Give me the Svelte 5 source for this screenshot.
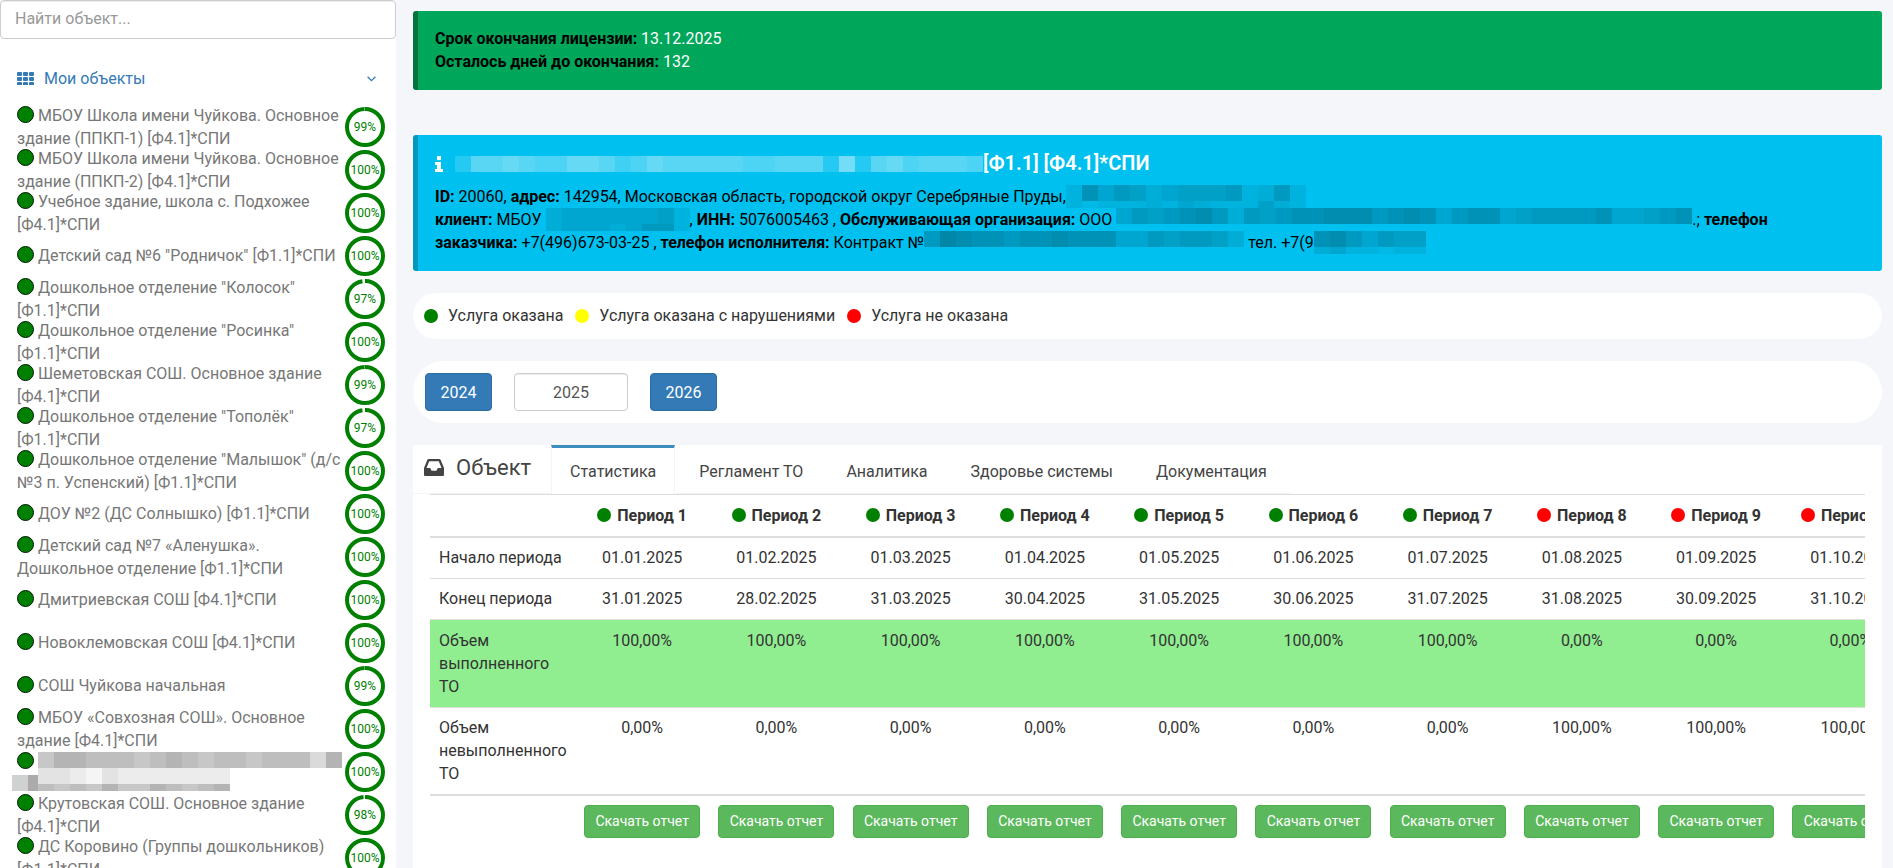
<script lang="ts">
	let search = '';
	let year = '2025';
	let activeTab = 'Статистика';

	// Sidebar objects: name (with its line breaks) and completion percentage
	const objects = [
		{ name: 'МБОУ Школа имени Чуйкова. Основное\nздание (ППКП-1) [Ф4.1]*СПИ', percent: 99 },
		{ name: 'МБОУ Школа имени Чуйкова. Основное\nздание (ППКП-2) [Ф4.1]*СПИ', percent: 100 },
		{ name: 'Учебное здание, школа с. Подхожее\n[Ф4.1]*СПИ', percent: 100 },
		{ name: 'Детский сад №6 "Родничок" [Ф1.1]*СПИ', percent: 100 },
		{ name: 'Дошкольное отделение "Колосок"\n[Ф1.1]*СПИ', percent: 97 },
		{ name: 'Дошкольное отделение "Росинка"\n[Ф1.1]*СПИ', percent: 100 },
		{ name: 'Шеметовская СОШ. Основное здание\n[Ф4.1]*СПИ', percent: 99 },
		{ name: 'Дошкольное отделение "Тополёк"\n[Ф1.1]*СПИ', percent: 97 },
		{ name: 'Дошкольное отделение "Малышок" (д/с\n№3 п. Успенский) [Ф1.1]*СПИ', percent: 100 },
		{ name: 'ДОУ №2 (ДС Солнышко) [Ф1.1]*СПИ', percent: 100 },
		{ name: 'Детский сад №7 «Аленушка».\nДошкольное отделение [Ф1.1]*СПИ', percent: 100 },
		{ name: 'Дмитриевская СОШ [Ф4.1]*СПИ', percent: 100 },
		{ name: 'Новоклемовская СОШ [Ф4.1]*СПИ', percent: 100 },
		{ name: 'СОШ Чуйкова начальная', percent: 99 },
		{ name: 'МБОУ «Совхозная СОШ». Основное\nздание [Ф4.1]*СПИ', percent: 100 },
		{ name: '', percent: 100 },
		{ name: 'Крутовская СОШ. Основное здание\n[Ф4.1]*СПИ', percent: 98 },
		{ name: 'ДС Коровино (Группы дошкольников)\n[Ф1.1]*СПИ', percent: 100 }
	];

	const legend = [
		{ color: 'green', label: 'Услуга оказана' },
		{ color: 'yellow', label: 'Услуга оказана с нарушениями' },
		{ color: 'red', label: 'Услуга не оказана' }
	];

	const tabs = ['Статистика', 'Регламент ТО', 'Аналитика', 'Здоровье системы', 'Документация'];

	const lastDays = [31, 28, 31, 30, 31, 30, 31, 31, 30, 31, 30, 31];
	const periods = lastDays.map((day, i) => {
		const month = String(i + 1).padStart(2, '0');
		const done = i < 7;
		return {
			title: `Период ${i + 1}`,
			color: done ? 'green' : 'red',
			start: `01.${month}.2025`,
			end: `${day}.${month}.2025`,
			done: done ? '100,00%' : '0,00%',
			missed: done ? '0,00%' : '100,00%'
		};
	});

	const RADIUS = 18;
	const LENGTH = 2 * Math.PI * RADIUS;
</script>

<!-- Hidden text: every digit is the strength of one cell, from 0 to 9 -->
{#snippet mosaic(rows: string[], tone: string)}
	<span class="mosaic {tone}">
		{#each rows as row}
			<span class="cells">
				{#each row as level}
					<i style="opacity: {Number(level) / 20}"></i>
				{/each}
			</span>
		{/each}
	</span>
{/snippet}

<div class="page">
	<aside class="sidebar">
		<input class="control search" type="search" aria-label="Найти объект" placeholder="Найти объект..." bind:value={search} />

		<a class="group" href="#objects">
			<svg width="17" height="13" viewBox="0 0 17 13" fill="currentColor" aria-hidden="true">
				{#each [0, 5, 10] as y}
					{#each [0, 6, 12] as x}
						<rect {x} {y} width="5" height="4" rx="1" />
					{/each}
				{/each}
			</svg>
			<span>Мои объекты</span>
			<svg class="chevron" width="9" height="6" viewBox="0 0 9 6" fill="none" stroke="currentColor" stroke-width="1.3" aria-hidden="true">
				<path d="M.6.8 4.5 4.7 8.4.8" />
			</svg>
		</a>

		<ul class="objects">
			{#each objects as object}
				<li>
					{#if object.name}
						<a href="#object"><span class="status"></span> {object.name}</a>
					{:else}
						<a class="masked" href="#object" aria-label="Объект">
							<span class="status"></span>
							{@render mosaic(['6887776787677677748', '332132222222', '767686687678'], 'gray')}
						</a>
					{/if}
					<svg class="ring" width="40" height="40" viewBox="0 0 40 40">
						<circle
							cx="20"
							cy="20"
							r={RADIUS}
							stroke-dasharray="{(LENGTH * object.percent) / 100} {LENGTH}"
							transform="rotate(-90 20 20)"
						/>
						<text x="20" y="24">{object.percent}%</text>
					</svg>
				</li>
			{/each}
		</ul>
	</aside>

	<main>
		<section class="callout success">
			<b>Срок окончания лицензии:</b> <span>13.12.2025</span><br />
			<b>Осталось дней до окончания:</b> <span>132</span>
		</section>

		<section class="callout info">
			<h4>
				<svg width="8" height="16" viewBox="0 0 8 16" fill="currentColor" aria-hidden="true">
					<path d="M2 0h4v4H2zM0 6h6v7h2v3H0v-3h2V9H0z" />
				</svg>
				{@render mosaic(['377876688756877777667773937867776'], 'white')}<span>[Ф1.1] [Ф4.1]*СПИ</span>
			</h4>
			<p>
				<b>ID:</b> 20060, <b>адрес:</b> 142954, Московская область, городской округ Серебряные Пруды,{@render mosaic(['274653455562362', '212223243222532'], 'dark')}<br />
				<b>клиент:</b> МБОУ {@render mosaic(['344444452', '344434662'], 'dark')}, <b>ИНН:</b> 5076005463 , <b>Обслуживающая организация:</b> ООО
				{@render mosaic(['465678636567788867874677456666744567'], 'dark')}.; <b>телефон</b><br />
				<b>заказчика:</b> +7(496)673-03-25 , <b>телефон исполнителя:</b> Контракт №{@render mosaic(['69877677877744656653'], 'dark')} тел. +7(9{@render mosaic(['7864655', '3422122'], 'dark')}
			</p>
		</section>

		<section class="pill legend">
			{#each legend as item}
				<span class="dot {item.color}"></span>
				<span class="legend-label">{item.label}</span>
			{/each}
		</section>

		<section class="pill years">
			<button class="btn primary" type="button">2024</button>
			<input class="control year" type="text" aria-label="Год" bind:value={year} />
			<button class="btn primary" type="button">2026</button>
		</section>

		<section class="panel">
			<nav class="tabs">
				<h3>
					<svg width="20" height="17" viewBox="0 0 20 17" fill="currentColor" aria-hidden="true">
						<path fill-rule="evenodd" d="M4.6 0h10.800q.9 0 1.300.9L20 9v7q0 1-1 1H1q-1 0-1-1V9L3.300.9Q3.700 0 4.600 0zM5.200 2.200 2.500 9h3.700l1.400 2.700h4.800L13.800 9h3.700l-2.700-6.800z" />
					</svg>
					Объект
				</h3>
				{#each tabs as tab}
					<button type="button" class:active={activeTab === tab} on:click={() => (activeTab = tab)}>{tab}</button>
				{/each}
			</nav>

			<div class="table-wrap">
				<table>
					<thead>
						<tr>
							<th class="name"></th>
							{#each periods as period}
								<th scope="col"><span class="dot {period.color}"></span> {period.title}</th>
							{/each}
						</tr>
					</thead>
					<tbody>
						<tr>
							<th scope="row">Начало периода</th>
							{#each periods as period}<td>{period.start}</td>{/each}
						</tr>
						<tr>
							<th scope="row">Конец периода</th>
							{#each periods as period}<td>{period.end}</td>{/each}
						</tr>
						<tr class="done">
							<th scope="row">Объем<br />выполненного<br />ТО</th>
							{#each periods as period}<td>{period.done}</td>{/each}
						</tr>
						<tr>
							<th scope="row">Объем<br />невыполненного<br />ТО</th>
							{#each periods as period}<td>{period.missed}</td>{/each}
						</tr>
					</tbody>
					<tfoot>
						<tr>
							<td></td>
							{#each periods as _}
								<td><button class="btn report" type="button">Скачать отчет</button></td>
							{/each}
						</tr>
					</tfoot>
				</table>
			</div>
		</section>
	</main>
</div>

<style>
	:global(body) {
		margin: 0;
		background: #f4f6fa;
		color: #333;
		font-family: Roboto, sans-serif;
		font-size: 16px;
		line-height: 23px;
	}

	* {
		box-sizing: border-box;
	}

	input,
	button {
		font: inherit;
	}

	a {
		color: inherit;
		text-decoration: none;
	}

	.page {
		display: flex;
		height: 100vh;
		overflow: hidden;
	}

	.sidebar {
		flex: 0 0 396px;
		background: #fff;
		overflow: hidden;
	}

	.control {
		border: 1px solid #ccc;
		border-radius: 4px;
		background: #fff;
		color: #555;
		box-shadow: inset 0 1px 1px rgba(0, 0, 0, 0.075);
	}

	.search {
		display: block;
		width: 100%;
		height: 39px;
		padding: 0 14px 2px;
	}

	.search::placeholder {
		color: #999;
	}

	.group {
		display: flex;
		align-items: center;
		gap: 10px;
		margin-top: 28px;
		padding: 0 20px 0 17px;
		color: #337ab7;
	}

	.chevron {
		margin-left: auto;
	}

	.objects {
		list-style: none;
		margin: 15px 0 0;
		padding: 0 11px 0 17px;
		color: #777;
	}

	.objects li {
		display: flex;
		align-items: center;
		height: 43px;
	}

	.objects a {
		flex: 1;
		min-width: 0;
		white-space: pre;
	}

	.objects .masked {
		display: flex;
		gap: 4px;
		position: relative;
	}

	/* the tail of the hidden name, left of the second line */
	.masked::after {
		content: '';
		position: absolute;
		left: -5px;
		bottom: 0;
		width: 26px;
		height: 16px;
		background: linear-gradient(90deg, #d0d2d1 16px, #adabaa 16px);
	}

	.status {
		display: inline-block;
		width: 17px;
		height: 17px;
		border: 1px solid #001a00;
		border-radius: 50%;
		background: green;
		vertical-align: -2px;
	}

	.ring {
		flex: none;
	}

	.ring circle {
		fill: none;
		stroke: green;
		stroke-width: 4;
	}

	.ring text {
		fill: green;
		font-size: 12px;
		text-anchor: middle;
	}

	.mosaic {
		display: inline-flex;
		flex-direction: column;
		vertical-align: top;
	}

	.cells {
		display: flex;
		height: 16px;
	}

	.cells:last-child:not(:first-child) {
		height: 7px;
	}

	.cells i {
		width: 16px;
	}

	.white i {
		background: #fff;
	}

	.dark i {
		background: #004050;
	}

	.gray i {
		background: #444;
	}

	main {
		flex: 1;
		min-width: 0;
		display: flex;
		flex-direction: column;
		padding: 11px 11px 0 17px;
	}

	.callout {
		flex: none;
		padding: 16px 17px 17px;
		border-left: 5px solid;
		border-radius: 3px;
		color: #000;
	}

	.success {
		margin-bottom: 45px;
		background: #00a65a;
		border-color: #00733e;
	}

	.success span {
		color: #fff;
	}

	.info {
		margin-bottom: 22px;
		padding-top: 17px;
		background: #00c0ef;
		border-color: #0097bc;
		white-space: nowrap;
	}

	h4 {
		display: flex;
		align-items: center;
		margin: 0 0 10px;
		color: #fff;
		font-size: 20px;
		font-weight: 600;
	}

	h4 svg {
		margin-right: 12px;
	}

	p {
		margin: 0;
	}

	.pill {
		display: flex;
		align-items: center;
		margin-bottom: 22px;
		border-radius: 32px;
		background: #fff;
	}

	.legend {
		padding: 11px 11px 12px;
	}

	.legend-label {
		margin: 0 12px 0 10px;
	}

	.dot {
		display: inline-block;
		width: 14px;
		height: 14px;
		border-radius: 50%;
		vertical-align: -1px;
	}

	.green {
		background: green;
	}

	.yellow {
		background: yellow;
	}

	.red {
		background: red;
	}

	.years {
		gap: 22px;
		padding: 12px;
	}

	.btn {
		border: 1px solid;
		border-radius: 4px;
		color: #fff;
		cursor: pointer;
	}

	.primary {
		width: 67px;
		height: 38px;
		padding: 0;
		background: #337ab7;
		border-color: #2e6da4;
	}

	.year {
		width: 114px;
		height: 38px;
		text-align: center;
	}

	.panel {
		flex: 1;
		background: #fff;
	}

	.tabs {
		display: flex;
		width: fit-content;
		height: 49px;
		border-bottom: 1px solid #f4f4f4;
	}

	.tabs h3 {
		display: flex;
		align-items: center;
		gap: 12px;
		margin: 0;
		padding: 0 20px 4px 11px;
		color: #444;
		font-size: 22px;
		font-weight: 400;
	}

	.tabs button {
		height: 49px;
		margin-right: 5px;
		padding: 1px 18px 0;
		border: solid transparent;
		border-width: 3px 1px 0;
		background: none;
		color: #444;
		cursor: pointer;
	}

	.tabs button.active {
		border-color: #3c8dbc #f4f4f4 transparent;
		background: #fff;
	}

	.table-wrap {
		margin: 0 17px;
		overflow: hidden;
	}

	table {
		width: 1756px;
		table-layout: fixed;
		border-collapse: collapse;
	}

	th,
	td {
		padding: 9px;
		border-top: 1px solid #ddd;
		text-align: center;
		vertical-align: top;
	}

	.name {
		width: 145px;
	}

	thead th {
		border-bottom: 2px solid #ddd;
		white-space: nowrap;
	}

	thead .dot {
		margin-right: 2px;
	}

	tbody th {
		font-weight: 400;
		text-align: left;
		white-space: nowrap;
	}

	tbody td,
	tbody th {
		padding: 8px 9px 9px;
	}

	.done {
		background: lightgreen;
	}

	.done td,
	.done th {
		padding-top: 9px;
	}

	tfoot td {
		border-top: 2px solid #ddd;
	}

	.report {
		width: 116px;
		height: 33px;
		padding: 0;
		background: #5cb85c;
		border-color: #4cae4c;
		font-size: 14px;
		white-space: nowrap;
	}
</style>
